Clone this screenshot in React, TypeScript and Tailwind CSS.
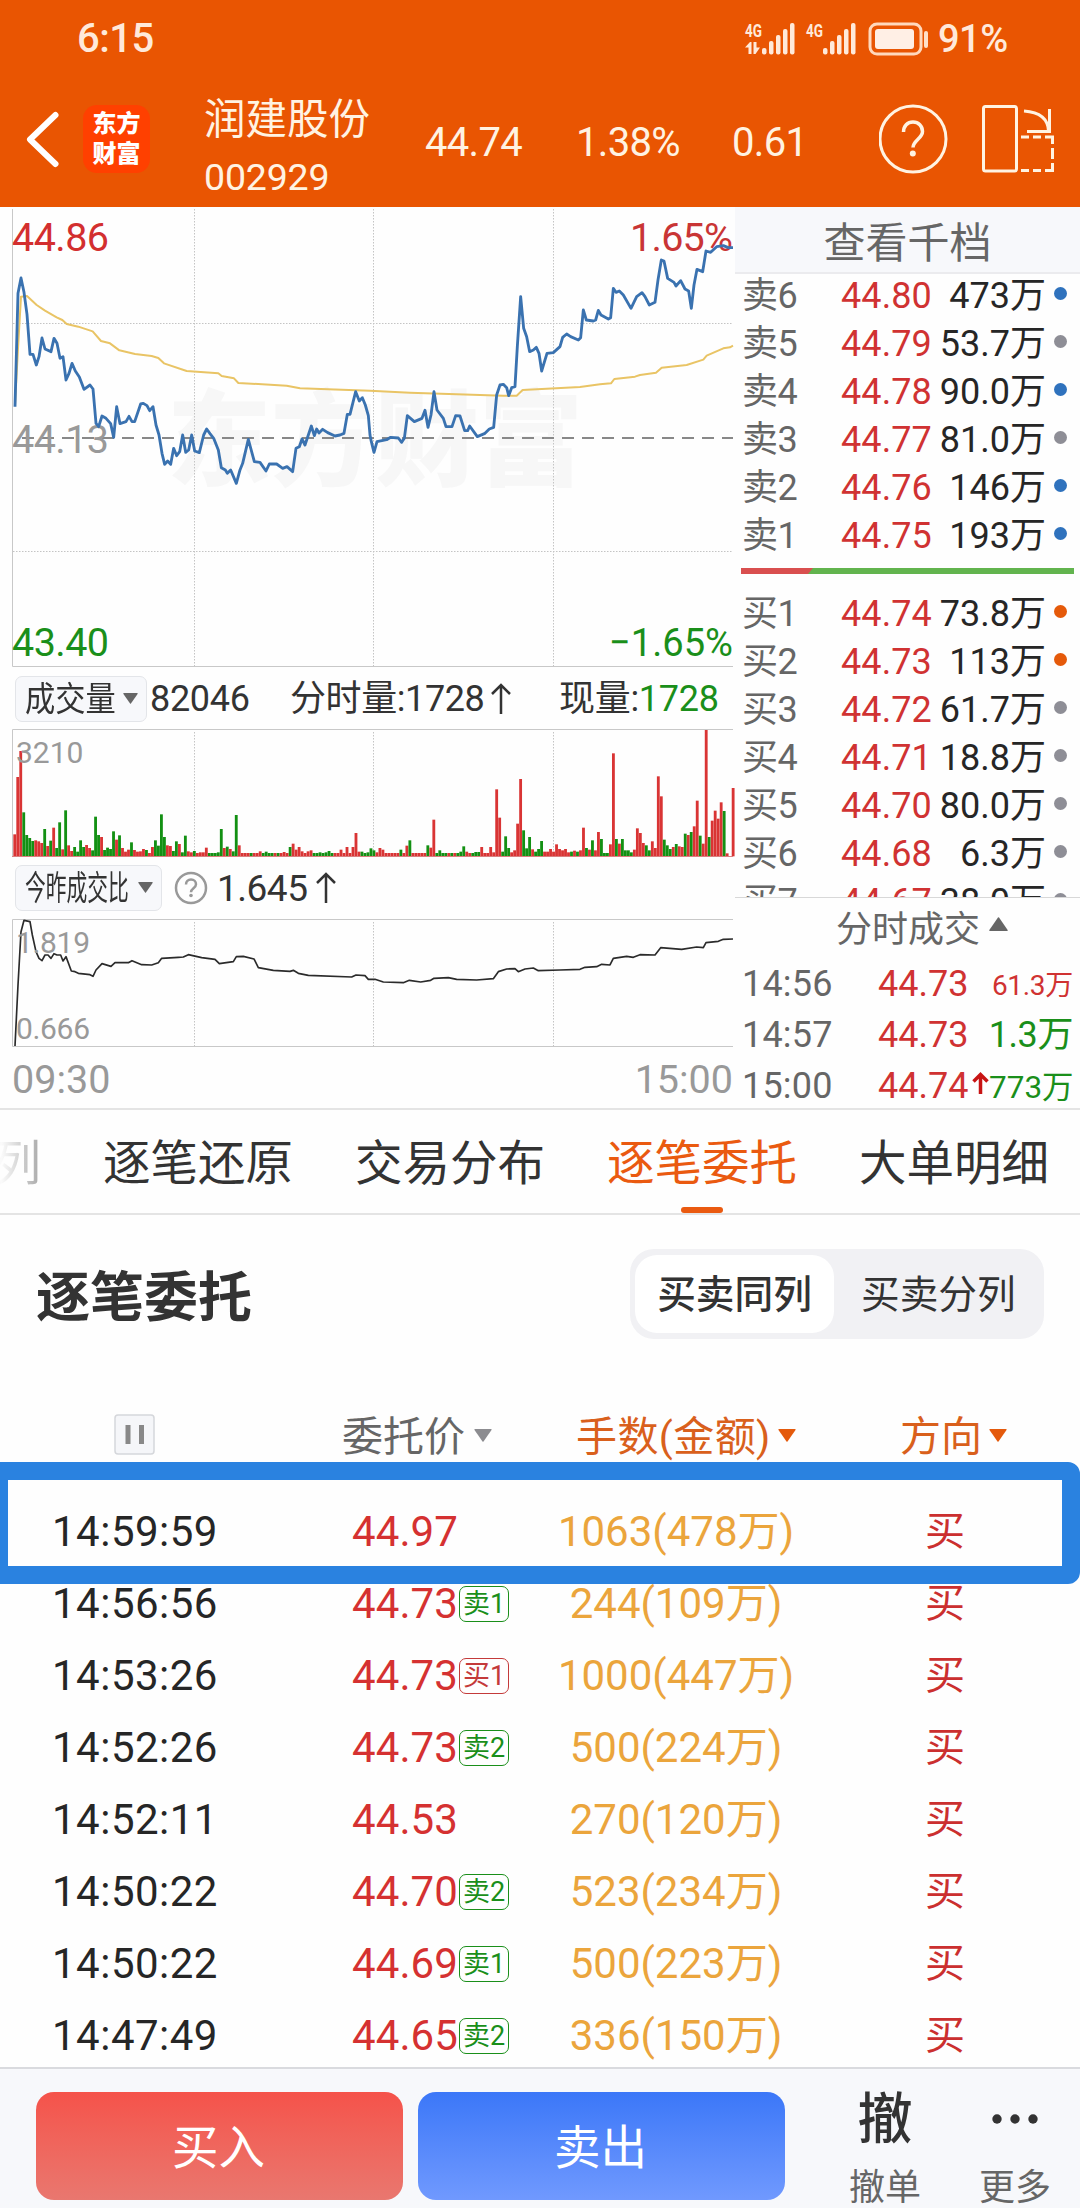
// App.tsx
import clsx from 'clsx';

// Series below are kept on a 3x grid, the charts scale them down again.
const PRICE_LINE =
  '45,605 54,265 63,219 72,262 81,328 90,448 99,448 109,480 117,455 126,399 135,432 153,440 162,400 171,415 180,460 189,455 198,525 207,505 216,475 226,498 238,516 252,553 270,540 279,552 288,655 296,665 306,633 318,640 332,656 341,697 350,605 360,656 378,650 387,634 396,650 404,650 422,597 430,595 441,602 449,617 459,605 468,660 477,690 486,745 494,778 503,768 512,778 521,730 530,752 539,740 548,690 557,742 566,735 575,690 584,738 598,743 611,690 620,672 630,686 641,700 655,735 664,788 676,795 682,805 692,795 709,835 720,795 728,775 745,703 763,770 780,772 798,798 808,777 830,777 848,790 861,785 878,800 888,730 898,725 906,702 915,720 925,690 934,663 943,692 950,672 957,684 968,673 983,683 1005,693 1020,690 1032,685 1042,628 1050,628 1067,560 1078,588 1087,578 1096,600 1105,632 1110,690 1114,710 1122,742 1131,710 1160,704 1172,697 1195,699 1205,712 1213,700 1222,632 1243,650 1266,640 1275,616 1284,667 1293,630 1302,560 1311,615 1330,640 1338,665 1356,665 1367,632 1380,633 1394,677 1403,677 1409,663 1432,695 1455,685 1468,672 1481,667 1490,570 1500,540 1510,538 1520,548 1526,572 1535,548 1545,545 1552,425 1562,275 1571,370 1580,395 1589,440 1600,435 1609,427 1617,445 1625,498 1641,445 1660,443 1680,425 1688,397 1700,387 1712,395 1735,405 1742,398 1750,315 1759,345 1780,348 1787,345 1795,316 1803,330 1825,342 1832,338 1840,250 1848,262 1858,258 1870,270 1893,310 1910,275 1926,263 1935,275 1948,300 1965,292 1974,225 1984,165 1992,168 2003,220 2022,232 2028,243 2042,227 2055,252 2066,258 2074,310 2082,240 2091,193 2108,200 2118,138 2132,142 2150,125 2170,122 2185,128 2199,128';

const AVERAGE_LINE =
  '45,600 54,430 63,275 81,273 110,300 135,317 170,337 187,345 200,357 235,365 278,379 303,408 330,415 358,436 405,447 455,453 475,459 492,475 560,498 655,505 665,513 702,520 715,534 860,542 900,550 1110,557 1230,563 1510,572 1550,572 1568,555 1740,546 1800,538 1833,535 1843,522 1905,515 1920,510 1968,503 1985,488 2060,480 2110,464 2120,452 2170,430 2190,427 2199,422';

const RATIO_LINE =
  '45,1143 54,960 63,800 72,766 90,770 97,810 108,860 117,880 126,887 135,870 144,870 153,880 162,866 171,870 182,870 189,888 198,875 214,918 225,920 235,925 270,929 279,934 288,915 306,896 333,904 345,893 385,893 396,887 425,899 455,900 475,893 485,880 535,877 550,876 565,869 605,878 645,883 658,896 700,890 709,875 730,874 762,882 775,908 820,916 870,919 880,916 895,925 925,931 1055,936 1068,930 1095,932 1105,943 1125,943 1150,951 1210,953 1228,946 1262,951 1292,946 1302,940 1345,938 1370,943 1430,945 1480,941 1495,920 1520,912 1545,911 1555,920 1575,912 1600,909 1615,917 1680,915 1740,913 1755,907 1790,905 1805,898 1830,900 1840,880 1880,874 1900,877 1920,869 1965,870 1982,848 2045,853 2090,846 2110,848 2118,833 2155,829 2170,823 2199,822';

// r = up minute, g = down minute, followed by the bar height
const VOLUME_BARS = (
  'r66 r238 r316 g132 g64 g55 g46 r48 r45 r40 g82 r31 g47 r86 g25 g102 r21 g138 r33 r16 g28 g14 g48 g28 r34 r25 g18 g119 g64 r58 ' +
  'g19 g26 g22 g75 r50 g63 r25 r14 r20 g42 r19 r14 r15 r22 g19 r10 r28 g48 g32 g126 g58 r33 r31 g16 g45 r37 g12 g62 r15 r12 ' +
  'g16 r10 r12 r12 r26 g10 g10 g10 g12 g82 r25 g29 r22 g15 g124 r33 r10 r10 r10 g10 r10 r10 r15 g10 g14 g10 g10 r10 g10 r10 ' +
  'r13 r10 g28 r38 r20 r28 r15 r10 r15 r18 g10 g10 g12 g10 g12 g16 g10 r10 r10 r20 r10 r28 r10 r28 r70 r14 g14 g10 g12 g24 ' +
  'g18 r12 r25 r20 r10 r10 r10 r10 r10 g20 r10 r32 g48 r10 r10 r10 r10 r10 g33 r26 r110 g10 g18 g10 g10 r10 g10 r10 g10 g14 ' +
  'g30 r14 r10 g10 g13 g13 r28 r10 r10 r28 r12 r201 r116 g14 g60 g25 r12 r18 r98 r232 g78 g24 g58 r21 g14 g22 g46 r14 r14 r22 ' +
  'r14 r36 r22 r18 r22 r12 g14 r17 g14 r18 r86 g25 r20 g48 r18 r73 g52 g10 g10 r36 r309 g52 r38 g52 g18 g18 g12 r20 r84 r70 ' +
  'r40 g33 g18 r45 r25 r240 r180 g50 g33 g22 r28 g37 r30 r28 g68 r64 g73 r90 r167 g62 r38 r379 g58 r107 r137 r113 r162 g136 r9 r0 r205'
).split(' ');

const SELLS = [
  ['卖6', '44.80', '473万', 'blue'],
  ['卖5', '44.79', '53.7万', 'gray'],
  ['卖4', '44.78', '90.0万', 'blue'],
  ['卖3', '44.77', '81.0万', 'gray'],
  ['卖2', '44.76', '146万', 'blue'],
  ['卖1', '44.75', '193万', 'blue'],
];

const BUYS = [
  ['买1', '44.74', '73.8万', 'orange'],
  ['买2', '44.73', '113万', 'orange'],
  ['买3', '44.72', '61.7万', 'gray'],
  ['买4', '44.71', '18.8万', 'gray'],
  ['买5', '44.70', '80.0万', 'gray'],
  ['买6', '44.68', '6.3万', 'gray'],
  ['买7', '44.67', '38.0万', 'gray'],
];

const ORDERS = [
  { time: '14:59:59', price: '44.97', tag: '', amount: '1063(478万)' },
  { time: '14:56:56', price: '44.73', tag: '卖1', amount: '244(109万)' },
  { time: '14:53:26', price: '44.73', tag: '买1', amount: '1000(447万)' },
  { time: '14:52:26', price: '44.73', tag: '卖2', amount: '500(224万)' },
  { time: '14:52:11', price: '44.53', tag: '', amount: '270(120万)' },
  { time: '14:50:22', price: '44.70', tag: '卖2', amount: '523(234万)' },
  { time: '14:50:22', price: '44.69', tag: '卖1', amount: '500(223万)' },
  { time: '14:47:49', price: '44.65', tag: '卖2', amount: '336(150万)' },
];

const TABS = ['逐笔还原', '交易分布', '逐笔委托', '大单明细'];

function SignalIcon({ data }: { data?: boolean }) {
  return (
    <svg className="overflow-visible" width="51" height="34" viewBox="0 0 51 34" fill="#ffe9da">
      <text x="0" y="15" fontSize="19" fontWeight="700" textLength="17" lengthAdjust="spacingAndGlyphs">4G</text>
      {data && <path d="M0 25.500 5 20h1.500v12H3.500v-6.500zM8.500 20h3v5.500H15L10.500 32h-2z" />}
      <rect x="17" y="26" width="4.500" height="6.500" rx="2" />
      <rect x="24" y="19" width="4.500" height="13.500" rx="2" />
      <rect x="31" y="13" width="4.500" height="19.500" rx="2" />
      <rect x="38" y="7" width="4.500" height="25.500" rx="2" />
      <rect x="45" y="1" width="4.500" height="31.500" rx="2" />
    </svg>
  );
}

function StatusBar() {
  return (
    <div className="flex h-[76px] items-center pt-[1px] pr-[72px] pl-[77px] text-[#ffe9da]">
      <span className="text-[40px] leading-none font-medium tracking-[-0.5px]">6:15</span>
      <div className="ml-auto flex items-center">
        <SignalIcon data />
        <div className="w-[10px]" />
        <SignalIcon />
        <svg className="ml-[11px]" width="62" height="36" viewBox="0 0 62 36">
          <rect x="2" y="3" width="51" height="30" rx="7" fill="none" stroke="#ffd9bd" strokeWidth="3" />
          <rect x="7" y="8" width="39" height="20" rx="3" fill="#ffefe5" />
          <rect x="56" y="10" width="4" height="17" rx="2" fill="#ffe0c8" />
        </svg>
        <span className="ml-[8px] w-[70px] text-[38px] leading-none font-medium tracking-[-0.5px]">91%</span>
      </div>
    </div>
  );
}

function Header() {
  return (
    <div className="flex h-[131px] items-center pb-[5px] text-[#fff3e2]">
      <svg className="ml-[24px]" width="40" height="60" viewBox="0 0 40 60" fill="none" stroke="#fff" strokeWidth="6" strokeLinecap="round" strokeLinejoin="round">
        <path d="M31.500 6 6 30.500 31.500 55" />
      </svg>
      <div className="ml-[19px] flex h-[68px] w-[67px] flex-col items-center justify-center rounded-[14px] bg-[#ff4000] text-[24px] leading-[30px] font-black text-white">
        <span>东方</span>
        <span>财富</span>
      </div>
      <div className="ml-[54px] flex w-[221px] flex-col pt-[18px]">
        <span className="text-[41.500px] leading-[57px]">润建股份</span>
        <span className="text-[37.500px] leading-[58px] tracking-[-0.2px]">002929</span>
      </div>
      <div className="flex pt-[8px] text-[40px] leading-none tracking-[-0.7px]">
        <span className="w-[151px]">44.74</span>
        <span className="w-[156px]">1.38%</span>
        <span className="w-[147px]">0.61</span>
      </div>
      <svg width="70" height="70" viewBox="0 0 70 70" fill="none" stroke="#fff3e2">
        <circle cx="34" cy="35" r="33" strokeWidth="3" />
        <path d="M24.500 28c0-6 4-10 9.500-10s9.500 4 9.500 9.500c0 7-9.500 9-9.500 16" strokeWidth="3.500" />
        <circle cx="33.800" cy="49.500" r="3" fill="#fff3e2" stroke="none" />
      </svg>
      <svg className="ml-[32px]" width="75" height="70" viewBox="0 0 75 70" fill="none" stroke="#fff3e2" strokeWidth="3">
        <rect x="2.500" y="2.500" width="33" height="64.500" rx="2" />
        <path d="M43 7c14 1 24 7 24.500 20M68.500 5v22.500H46" />
        <path d="M40 33h8m4 0h8m4 0h7.500v7m0 4v11m0 4v7.500H64m-4 0h-8m-4 0h-8" />
      </svg>
    </div>
  );
}

function PriceChart() {
  return (
    <svg className="block" width="735" height="461" viewBox="0 207 735 461">
      <text x="167" y="478" fontSize="104" fontWeight="900" fill="#f7f7f7">东方财富</text>
      <g stroke="#c4c4c4" strokeWidth="1" strokeDasharray="1.500 1.500">
        <path d="M194.500 209V666M373.500 209V666M553.500 209V666M13 323.500H733M13 551.500H733" />
      </g>
      <path d="M12.500 209V666.500H733" fill="none" stroke="#c8c8c8" />
      <path d="M22 438H733" stroke="#888" strokeWidth="2" strokeDasharray="12 8" />
      <g fontSize="39.500">
        <text x="12" y="251" fill="#d32f2f" textLength="97">44.86</text>
        <text x="12" y="453" fill="#999" textLength="97">44.13</text>
        <text x="12" y="656" fill="#1a8f1a" textLength="97">43.40</text>
        <text x="630" y="251" fill="#c93535" textLength="103">1.65%</text>
        <text x="609" y="656" fill="#1a8f1a" textLength="124" lengthAdjust="spacingAndGlyphs">−1.65%</text>
      </g>
      <g transform="translate(0 205) scale(0.33333)" fill="none" strokeLinejoin="round">
        <polyline points={AVERAGE_LINE} stroke="#e9c465" strokeWidth="6" />
        <polyline points={PRICE_LINE} stroke="#3a72b0" strokeWidth="8.500" />
      </g>
    </svg>
  );
}

function VolumeChart() {
  return (
    <svg className="block" width="735" height="129" viewBox="0 729 735 129">
      <path d="M194.500 732V856M373.500 732V856M553.500 732V856" stroke="#c4c4c4" strokeDasharray="1.500 1.500" />
      <path d="M733 729.500H12.500V856" fill="none" stroke="#c8c8c8" />
      <g transform="translate(0 665) scale(0.33333)">
        {VOLUME_BARS.map((bar, i) => {
          const height = Number(bar.slice(1));
          return (
            <rect key={i} x={40 + i * 8.98} y={574 - height} width="8.500" height={height} fill={bar[0] === 'r' ? '#d93434' : '#139013'} />
          );
        })}
      </g>
      <path d="M12 856.500H733" stroke="#d98080" />
      <text x="16" y="763" fontSize="30" fill="#999">3210</text>
    </svg>
  );
}

function RatioChart() {
  return (
    <svg className="block" width="735" height="129" viewBox="0 919 735 129">
      <path d="M194.500 922V1046M373.500 922V1046M553.500 922V1046" stroke="#c4c4c4" strokeDasharray="1.500 1.500" />
      <path d="M733 919.500H12.500V1046.500H733" fill="none" stroke="#c8c8c8" />
      <polyline transform="translate(0 665) scale(0.33333)" points={RATIO_LINE} fill="none" stroke="#2b2b2b" strokeWidth="5" strokeLinejoin="round" />
      <text x="16" y="953" fontSize="30" fill="#999" textLength="74">1.819</text>
      <text x="16" y="1039" fontSize="30" fill="#999" textLength="74">0.666</text>
    </svg>
  );
}

function UpArrow({ className }: { className?: string }) {
  return (
    <svg className={className} width="20" height="32" viewBox="0 0 20 32" fill="none" stroke="#333" strokeWidth="2.500">
      <path d="M10 2v29M1 11l9-9 9 9" />
    </svg>
  );
}

function Triangle({ className }: { className: string }) {
  return (
    <svg className={className} width="18" height="13" viewBox="0 0 18 13" fill="currentColor">
      <path d="M1 0h16q1 0 .5 1L9.500 12.500q-.5.5-1 0L.5 1Q0 0 1 0z" />
    </svg>
  );
}

function LeftCharts() {
  return (
    <div className="w-[735px] shrink-0">
      <PriceChart />
      <div className="flex h-[61px] items-center pl-[15px] text-[36px] leading-none text-[#333]">
        <div className="flex h-[46px] w-[132px] items-center rounded-[7px] border border-[#e3e5e9] bg-[#f7f8fb] pl-[9px]">
          <span className="w-[92px] origin-left scale-x-[0.89] text-[34px] whitespace-nowrap">成交量</span>
          <Triangle className="ml-[6px] w-[15px] text-[#666]" />
        </div>
        <span className="ml-[3px] w-[140px] tracking-[-0.3px]">82046</span>
        <span className="w-[201px] tracking-[-0.4px] whitespace-nowrap">分时量:1728</span>
        <UpArrow className="w-[20px]" />
        <span className="ml-[48px] tracking-[-0.3px] whitespace-nowrap">
          现量:<span className="text-[#1a8f1a]">1728</span>
        </span>
      </div>
      <VolumeChart />
      <div className="flex h-[61px] items-center pb-[2px] pl-[15px] text-[37px] leading-none text-[#333]">
        <div className="flex h-[46px] w-[147px] items-center rounded-[7px] border border-[#e3e5e9] bg-[#f7f8fb] pl-[9px]">
          <span className="w-[107px] origin-left scale-x-[0.61] text-[34px] whitespace-nowrap">今昨成交比</span>
          <Triangle className="ml-[6px] w-[15px] text-[#666]" />
        </div>
        <svg className="ml-[12px]" width="34" height="34" viewBox="0 0 34 34" fill="none" stroke="#999" strokeWidth="2.500">
          <circle cx="17" cy="17" r="15" />
          <path d="M12 13.500c0-3 2-5 5-5s5 2 5 4.700c0 4-5 4-5 8" />
          <circle cx="17" cy="24.500" r="1.800" fill="#999" stroke="none" />
        </svg>
        <span className="ml-[9px] w-[99px] pt-[2px] tracking-[-0.5px]">1.645</span>
        <UpArrow />
      </div>
      <RatioChart />
      <div className="flex h-[60px] items-center justify-between pt-[4px] pr-[2px] pl-[12px] text-[39.500px] leading-none text-[#999]">
        <span>09:30</span>
        <span>15:00</span>
      </div>
    </div>
  );
}

function DepthRow({ row }: { row: string[] }) {
  const [label, price, volume, dot] = row;
  return (
    <div className="flex h-[48px] shrink-0 items-center pl-[7px] text-[36px] leading-none whitespace-nowrap">
      <span className="w-[99px] tracking-[-0.4px] text-[#666]">{label}</span>
      <span className="w-[90px] tracking-[0.1px] text-[#d03232]">{price}</span>
      <span className="w-[115px] text-right text-[#262626]">{volume}</span>
      <span
        className={clsx(
          'mb-[6px] ml-[8px] h-[13px] w-[13px] rounded-full',
          dot === 'blue' && 'bg-[#2f72bd]',
          dot === 'gray' && 'bg-[#8e8e96]',
          dot === 'orange' && 'bg-[#e55a0a]',
        )}
      />
    </div>
  );
}

function OrderBook() {
  return (
    <div className="flex w-[345px] flex-col">
      <div className="flex h-[67px] shrink-0 items-center justify-center border-b-2 border-[#ebebee] bg-[#f7f8fb] pt-[9px] text-[42px] leading-none text-[#666]">
        查看千档
      </div>
      <div className="flex h-[624px] shrink-0 flex-col overflow-hidden border-b border-[#d8d8d8]">
        <div className="mt-[-2px] flex flex-col">
          {SELLS.map((row) => <DepthRow key={row[0]} row={row} />)}
        </div>
        <div className="mt-[8px] mb-[16px] ml-[6px] flex h-[6px] w-[333px] shrink-0 bg-[#62b44e]">
          <div className="h-full w-[72px] bg-[#d94f4f] [clip-path:polygon(0_0,100%_0,67px_100%,0_100%)]" />
        </div>
        {BUYS.map((row) => <DepthRow key={row[0]} row={row} />)}
      </div>
      <div className="flex h-[60px] shrink-0 items-center pt-[4px] pl-[101px] text-[36px] leading-none text-[#666]">
        分时成交
        <Triangle className="mb-[12px] ml-[8px] h-[14px] w-[21px] rotate-180" />
      </div>
      <div className="flex h-[51px] shrink-0 items-center pt-[1px] pl-[7px] text-[36px] leading-none whitespace-nowrap">
        <span className="w-[136px] tracking-[0.2px] text-[#666]">14:56</span>
        <span className="w-[90px] text-[#d03232]">44.73</span>
        <span className="w-[105px] pt-[4px] text-right text-[28px] tracking-[-0.3px] text-[#d03232]">61.3万</span>
      </div>
      <div className="flex h-[51px] shrink-0 items-center pt-[1px] pl-[7px] text-[36px] leading-none whitespace-nowrap">
        <span className="w-[136px] tracking-[0.2px] text-[#666]">14:57</span>
        <span className="w-[90px] text-[#d03232]">44.73</span>
        <span className="w-[105px] text-right tracking-[-0.4px] text-[#1a8f1a]">1.3万</span>
      </div>
      <div className="-mb-[3px] flex h-[51px] shrink-0 items-center pt-[1px] pl-[7px] text-[36px] leading-none whitespace-nowrap">
        <span className="w-[136px] tracking-[0.2px] text-[#666]">15:00</span>
        <span className="w-[94px] text-[#d03232]">44.74</span>
        <svg className="mb-[6px]" width="17" height="22" viewBox="0 0 17 22" fill="none" stroke="#c81414" strokeWidth="3.500">
          <path d="M8.500 2v20M1.500 9.500l7-7 7 7" />
        </svg>
        <span className="w-[84px] pt-[3px] text-right text-[31.500px] text-[#1a8f1a]">773万</span>
      </div>
    </div>
  );
}

function TabBar() {
  return (
    <div className="flex h-[107px] items-stretch overflow-hidden border-t-2 border-b-2 border-[#e4e4e4] bg-[#fefefe] text-[47.500px] leading-none whitespace-nowrap text-[#333]">
      <span className="-ml-[8px] flex w-[49px] items-center justify-end bg-gradient-to-r from-[#fafafa] from-20% to-[#a8a8a8] bg-clip-text pt-[6px] text-transparent">列</span>
      <div className="ml-[62px] flex gap-[62px]">
        {TABS.map((tab) => (
          <div key={tab} className={clsx('flex w-[190px] flex-col items-center', tab === '逐笔委托' && 'text-[#ea5a10]')}>
            <span className="flex flex-1 items-center pt-[13px]">{tab}</span>
            <span className={clsx('h-[6px] w-[42px] rounded-[3px]', tab === '逐笔委托' && 'bg-[#ea5a10]')} />
          </div>
        ))}
      </div>
    </div>
  );
}

function OrderList() {
  return (
    <div className="h-[852px] overflow-hidden">
      <div className="flex h-[161px] items-center justify-between pr-[36px] pl-[36px] leading-none">
        <h2 className="pt-[6px] text-[54px] font-bold text-[#333]">逐笔委托</h2>
        <div className="mb-[4px] flex h-[90px] w-[414px] items-center rounded-[24px] bg-[#f1f1f4] pl-[5px] text-[38.700px] text-[#333]">
          <span className="flex h-[78px] w-[199px] items-center justify-center rounded-[22px] bg-white pt-[4px] font-medium">买卖同列</span>
          <span className="ml-[27px] pt-[4px]">买卖分列</span>
        </div>
      </div>

      <div className="flex h-[119px] items-end pb-[38px] text-[41px] leading-none whitespace-nowrap text-[#d9601c]">
        <svg className="mb-[1px] ml-[114px]" width="42" height="42" viewBox="0 0 42 42">
          <rect x="1" y="1" width="39" height="39" rx="3" fill="#f5f6f9" stroke="#d5d7db" strokeWidth="1.500" />
          <path d="M14 11v19M27.500 11v19" stroke="#888" strokeWidth="5" />
        </svg>
        <div className="ml-[186px] flex w-[234px] items-center text-[#666]">
          <span className="translate-y-[1px]">委托价</span>
          <Triangle className="mb-[2px] ml-[9px] text-[#8c8c90]" />
        </div>
        <div className="flex w-[324px] items-center">
          <span className="translate-y-[1px] tracking-[0.4px]">手数(金额)</span>
          <Triangle className="mb-[2px] ml-[7px] text-[#e45a0c]" />
        </div>
        <div className="flex items-center">
          <span className="translate-y-[1px]">方向</span>
          <Triangle className="mb-[2px] ml-[7px] text-[#e45a0c]" />
        </div>
      </div>

      <div className="relative">
        {ORDERS.map((order, i) => (
          <div key={i} className="flex h-[72px] items-center pt-[2px] pl-[52px] text-[42px] leading-none whitespace-nowrap">
            <span className="w-[300px] tracking-[0.5px] text-[#262626]">{order.time}</span>
            <span className="w-[107px] tracking-[0.1px] text-[#d53131]">{order.price}</span>
            <span className="w-[89px]">
              {order.tag && (
                <span
                  className={clsx(
                    'flex h-[36px] w-[50px] items-center justify-center rounded-[7px] border text-[27px]',
                    order.tag[0] === '卖' ? 'border-[#1a8f1a] text-[#1a8f1a]' : 'border-[#c43a3a] text-[#c43a3a]',
                  )}
                >
                  {order.tag}
                </span>
              )}
            </span>
            <span className="w-[256px] text-center text-[#eba53c]">{order.amount}</span>
            <span className="ml-[121px] text-[40px] text-[#cb2f2f]">买</span>
          </div>
        ))}
        {/* marker around the latest order */}
        <div className="absolute top-[-33px] left-0 h-[122px] w-[1080px] rounded-r-[12px] border-y-[18px] border-r-[18px] border-l-[8px] border-[#2a82e0]" />
      </div>
    </div>
  );
}

function BottomBar() {
  return (
    <div className="flex h-[141px] items-start border-t-2 border-[#d9dade] bg-[#f7f8fb] pt-[23px] pl-[36px] leading-none">
      <button className="flex h-[108px] w-[367px] items-center justify-center rounded-[18px] bg-gradient-to-b from-[#f5524a] to-[#e9776f] pt-[4px] pr-[2px] text-[46.500px] text-white">
        买入
      </button>
      <button className="ml-[15px] flex h-[108px] w-[367px] items-center justify-center rounded-[18px] bg-gradient-to-b from-[#3b77f8] to-[#7099fe] pt-[4px] pr-[2px] text-[46.500px] text-white">
        卖出
      </button>
      <div className="ml-[50px] flex w-[100px] flex-col items-center text-[36px] text-[#666]">
        <span className="h-[78px] text-[55px] font-medium text-[#333]">撤</span>
        撤单
      </div>
      <div className="ml-[30px] flex w-[100px] flex-col items-center text-[36px] text-[#666]">
        <svg className="mb-[16px]" width="50" height="62" viewBox="0 0 50 62" fill="#333">
          <circle cx="7" cy="27" r="4.700" />
          <circle cx="25" cy="27" r="4.700" />
          <circle cx="43" cy="27" r="4.700" />
        </svg>
        更多
      </div>
    </div>
  );
}

export default function App() {
  return (
    <div className="h-[2208px] w-[1080px] overflow-hidden bg-[#fefefe] font-[Roboto,'Noto_Sans_CJK_SC',sans-serif]">
      <div className="bg-[#e95502]">
        <StatusBar />
        <Header />
      </div>
      <div className="flex h-[901px]">
        <LeftCharts />
        <OrderBook />
      </div>
      <TabBar />
      <OrderList />
      <BottomBar />
    </div>
  );
}
